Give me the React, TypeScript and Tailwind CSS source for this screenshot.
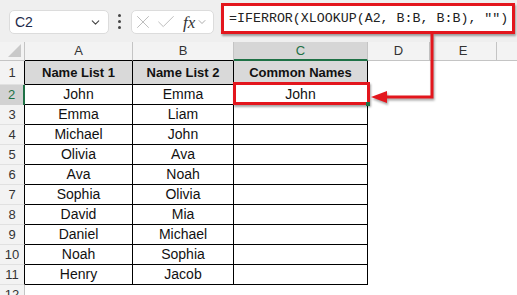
import { ChevronDown, X, Check } from "lucide-react";

const colA = ["John", "Emma", "Michael", "Olivia", "Ava", "Sophia", "David", "Daniel", "Noah", "Henry"];
const colB = ["Emma", "Liam", "John", "Ava", "Noah", "Olivia", "Mia", "Michael", "Sophia", "Jacob"];
const colC = ["John", "", "", "", "", "", "", "", "", ""];

const FONT = "font-['Liberation_Sans',Arial,sans-serif]";

function RowHead({ n }: { n: number }) {
  if (n === 2) {
    return (
      <div className="flex items-center justify-center bg-[#d2d2d2] border-r-2 border-r-[#1e7145] text-[13px] text-[#1e7145]">
        {n}
      </div>
    );
  }
  return (
    <div
      className={`flex items-center justify-center bg-[#f3f3f3] border-b border-b-[#e1e1e1] text-[13px] text-[#333] ${
        n <= 11 ? "border-r border-r-black" : "border-r border-r-[#c4c4c4]"
      }`}
    >
      {n}
    </div>
  );
}

function Cell({ text }: { text: string }) {
  return (
    <div className="flex items-center justify-center border-r border-r-black border-b border-b-black text-[14px] text-[#111]">
      {text}
    </div>
  );
}

export default function App() {
  return (
    <div className={`relative w-[517px] h-[295px] overflow-hidden bg-white ${FONT}`}>
      {/* toolbar */}
      <div className="h-[42px] bg-[#efefef] flex items-start pl-[9px]">
        <div className="mt-[10px] w-[100px] h-[24px] bg-white border border-[#dcdcdc] rounded-[5px] flex items-center justify-between pl-[5px] pr-[6px]">
          <span className="text-[14px] text-[#1d2a4a]">C2</span>
          <ChevronDown size={13} strokeWidth={2} className="text-[#444]" />
        </div>
        <div className="mt-[14px] ml-[9px] w-[3px] flex flex-col gap-[3px]">
          <span className="w-[3px] h-[3px] rounded-full bg-[#444]" />
          <span className="w-[3px] h-[3px] rounded-full bg-[#444]" />
          <span className="w-[3px] h-[3px] rounded-full bg-[#444]" />
        </div>
        <div className="mt-[10px] ml-[10px] w-[83px] h-[24px] bg-white border border-[#dcdcdc] rounded-[5px] flex items-center">
          <X size={22} strokeWidth={1} className="text-[#b8b8b8] shrink-0" />
          <Check size={22} strokeWidth={1} className="text-[#b8b8b8] ml-px shrink-0" />
          <span className="ml-[6px] text-[17px] italic font-['Liberation_Serif',serif] text-[#333] leading-none">fx</span>
          <ChevronDown size={12} strokeWidth={1.4} className="text-[#888] ml-px shrink-0" />
        </div>
        <div className="mt-[3px] ml-[7px] w-[294px] h-[31px] bg-white border-[3px] border-[#e3161d] shadow-[1px_2px_2px_rgba(0,0,0,0.35)] flex items-center pl-[5px] overflow-hidden">
          <span className="font-['Liberation_Mono',monospace] text-[13.3px] text-[#222] whitespace-pre">
            =IFERROR(XLOOKUP(A2, B:B, B:B), "")
          </span>
        </div>
      </div>

      {/* grid */}
      <div className="grid grid-cols-[25px_108px_101px_134px_62px_67px_1fr] grid-rows-[19px_24px_repeat(11,20px)] text-[#333]">
        {/* column headers */}
        <div className="relative bg-[#f3f3f3] border-r border-r-[#c4c4c4] border-b border-b-[#c4c4c4]">
          <svg width="13" height="13" className="absolute right-[3px] bottom-[3px]">
            <polygon points="13,0 13,13 0,13" fill="#c9c9c9" />
          </svg>
        </div>
        <div className="flex items-center justify-center bg-[#f3f3f3] border-r border-r-[#c4c4c4] border-b border-b-black text-[13px]">A</div>
        <div className="flex items-center justify-center bg-[#f3f3f3] border-r border-r-[#c4c4c4] border-b border-b-black text-[13px]">B</div>
        <div className="flex items-center justify-center bg-[#d6d6d6] border-r border-r-[#c4c4c4] border-b-2 border-b-[#1e7145] text-[13px] text-[#1e7145]">C</div>
        <div className="flex items-center justify-center bg-[#f3f3f3] border-r border-r-[#c4c4c4] border-b border-b-[#c4c4c4] text-[13px]">D</div>
        <div className="flex items-center justify-center bg-[#f3f3f3] border-r border-r-[#c4c4c4] border-b border-b-[#c4c4c4] text-[13px]">E</div>
        <div className="bg-[#f3f3f3] border-b border-b-[#c4c4c4]" />

        {/* row 1 */}
        <RowHead n={1} />
        <div className="flex items-center justify-center bg-[#d9d9d9] border-r border-r-black border-b border-b-black text-[13px] font-bold text-[#111]">Name List 1</div>
        <div className="flex items-center justify-center bg-[#d9d9d9] border-r border-r-black border-b border-b-black text-[13px] font-bold text-[#111]">Name List 2</div>
        <div className="flex items-center justify-center bg-[#d9d9d9] border-r border-r-black border-b border-b-black text-[13px] font-bold text-[#111]">Common Names</div>
        <div />
        <div />
        <div />

        {colA.map((a, i) => (
          <div key={a + i} className="contents">
            <RowHead n={i + 2} />
            <Cell text={a} />
            <Cell text={colB[i]} />
            <Cell text={colC[i]} />
            <div />
            <div />
            <div />
          </div>
        ))}

        <RowHead n={12} />
      </div>

      {/* selection / callout overlays */}
      <div className="absolute left-[233px] top-[82px] w-[137px] h-[23px] border-[3px] border-[#e3161d] shadow-[1px_2px_2px_rgba(0,0,0,0.35)]" />
      <div className="absolute left-[366px] top-[102px] w-[4px] h-[4px] bg-[#1e7145]" />
      <svg
        className="absolute left-0 top-0 drop-shadow-[1px_2px_1px_rgba(0,0,0,0.35)]"
        width="517"
        height="295"
      >
        <polyline points="432,34 432,97 384,97" fill="none" stroke="#e3161d" strokeWidth="3" />
        <polygon points="371,97 387,91 387,103" fill="#e3161d" />
      </svg>
    </div>
  );
}
